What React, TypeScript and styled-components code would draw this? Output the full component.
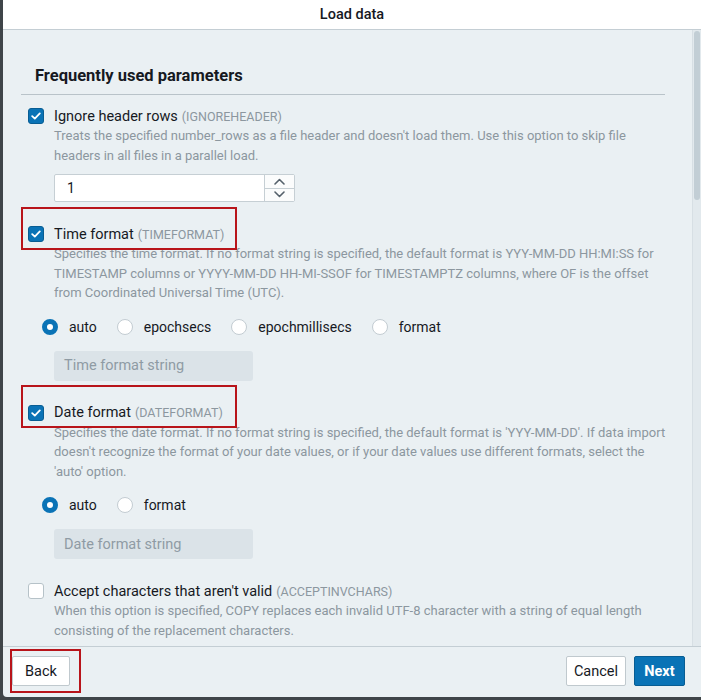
import React from 'react'
import styled, { createGlobalStyle } from 'styled-components'

const GlobalStyle = createGlobalStyle`
  html, body {
    margin: 0;
    padding: 0;
    background: #3f4549;
    font-family: Roboto, "Liberation Sans", sans-serif;
    -webkit-font-smoothing: antialiased;
  }
`

const Dialog = styled.div`
  margin-left: 3px;
  width: 698px;
  height: 697px;
  background: #eaf0f3;
  display: flex;
  flex-direction: column;
  border-bottom-left-radius: 4px;
  overflow: hidden;
`

const Header = styled.div`
  height: 29px;
  flex: none;
  background: #ffffff;
  border-bottom: 1px solid #c4ced4;
  display: flex;
  align-items: center;
  justify-content: center;
  font-size: 14.5px;
  font-weight: 500;
  color: #16191f;
`

const Body = styled.div`
  flex: 1;
  position: relative;
  overflow: hidden;
  padding: 36px 36px 0 18px;
`

const Scrollbar = styled.div`
  position: absolute;
  top: 0;
  right: 0;
  bottom: 0;
  width: 8px;
  background: #e2e9ed;
  border-left: 1px solid #d7dfe4;
`

const Thumb = styled.div`
  margin: 1px 1px 0 1px;
  height: 169px;
  border-radius: 3px;
  background: #c2ced5;
`

const SectionTitle = styled.h2`
  margin: 0;
  padding: 0 0 8px 14px;
  font-size: 16.5px;
  line-height: 20px;
  font-weight: 700;
  color: #16191f;
  border-bottom: 1px solid #b9c3c9;
`

const Options = styled.div`
  display: flex;
  flex-direction: column;
  gap: 22px;
  padding: 11px 0 0 7px;
`

const Option = styled.div`
  display: flex;
  flex-direction: column;
`

const LabelRow = styled.label`
  position: relative;
  display: flex;
  align-items: center;
  gap: 10px;
  height: 20px;
  font-size: 14.5px;
  color: #16191f;
`

const Box = styled.span<{ $checked?: boolean }>`
  width: 16px;
  height: 16px;
  box-sizing: border-box;
  border-radius: 3px;
  flex: none;
  display: flex;
  align-items: center;
  justify-content: center;
  background: ${(p) => (p.$checked ? '#0a73b6' : '#ffffff')};
  border: 1px solid ${(p) => (p.$checked ? '#085d93' : '#b6c2c8')};
`

const Code = styled.span`
  font-size: 12.5px;
  color: #8c979f;
  margin-left: 4px;
`

const Desc = styled.p`
  margin: 0 -8px 0 0;
  padding-left: 26px;
  font-size: 13px;
  line-height: 19.5px;
  color: #8c979f;
`

const RadioGroup = styled.div`
  display: flex;
  align-items: center;
  gap: 20px;
  margin: 14px 0 0 14px;
`

const RadioItem = styled.label`
  display: flex;
  align-items: center;
  gap: 11px;
  height: 20px;
  font-size: 14px;
  color: #16191f;
`

const Radio = styled.span<{ $on?: boolean }>`
  width: 16px;
  height: 16px;
  box-sizing: border-box;
  border-radius: 50%;
  background: #ffffff;
  border: ${(p) => (p.$on ? '5px solid #0a73b6' : '1px solid #c3ccd2')};
`

const NumberField = styled.div`
  margin: 9px 0 0 26px;
  width: 241px;
  height: 28px;
  box-sizing: border-box;
  display: flex;
  background: #ffffff;
  border: 1px solid #c6cfd4;
  border-radius: 2px;
`

const NumberValue = styled.div`
  flex: 1;
  padding-left: 12px;
  display: flex;
  align-items: center;
  font-size: 14px;
  color: #16191f;
`

const Spinner = styled.div`
  width: 29px;
  display: flex;
  flex-direction: column;
  border-left: 1px solid #c6cfd4;
  background: #fbfcfc;
`

const SpinButton = styled.span<{ $top?: boolean }>`
  flex: 1;
  display: flex;
  align-items: center;
  justify-content: center;
  border-bottom: ${(p) => (p.$top ? '1px solid #c6cfd4' : 'none')};
`

const TextField = styled.div`
  margin: 14px 0 0 26px;
  width: 199px;
  height: 30px;
  box-sizing: border-box;
  padding-left: 10px;
  display: flex;
  align-items: center;
  border-radius: 3px;
  background: #dbe3e8;
  font-size: 14.5px;
  color: #8f9ba4;
`

const Footer = styled.div`
  flex: none;
  height: 48px;
  border-top: 1px solid #c4ced4;
  display: flex;
  align-items: center;
  padding: 0 16px 2px 9px;
  gap: 8px;
`

const Spacer = styled.div`
  flex: 1;
`

const Marked = styled.div`
  position: relative;
  display: flex;
`

const Button = styled.button<{ $primary?: boolean; $w: number }>`
  width: ${(p) => p.$w}px;
  height: 30px;
  padding: 0;
  border-radius: 2px;
  font-family: inherit;
  font-size: 14.5px;
  font-weight: ${(p) => (p.$primary ? 700 : 400)};
  color: ${(p) => (p.$primary ? '#ffffff' : '#16191f')};
  background: ${(p) => (p.$primary ? '#0a73b6' : '#ffffff')};
  border: 1px solid ${(p) => (p.$primary ? '#085d93' : '#c0c9ce')};
`

const Annotation = styled.span<{ $l: number; $t: number; $w: number; $h: number }>`
  position: absolute;
  left: ${(p) => p.$l}px;
  top: ${(p) => p.$t}px;
  width: ${(p) => p.$w}px;
  height: ${(p) => p.$h}px;
  box-sizing: border-box;
  border: 2px solid #b8141a;
  pointer-events: none;
`

const Check = () => (
  <svg width="10" height="8" viewBox="0 0 10 8">
    <path d="M1.2 4.2 L3.8 6.6 L8.8 1.4" fill="none" stroke="#fff" strokeWidth="1.8" strokeLinecap="round" strokeLinejoin="round" />
  </svg>
)

const Chevron = ({ up }: { up?: boolean }) => (
  <svg width="11" height="7" viewBox="0 0 11 7">
    <path d={up ? 'M1 6 L5.5 1.5 L10 6' : 'M1 1 L5.5 5.5 L10 1'} fill="none" stroke="#55616b" strokeWidth="1.6" strokeLinecap="round" strokeLinejoin="round" />
  </svg>
)

type Mark = { l: number; t: number; w: number; h: number }

function CheckRow({ checked, label, code, mark }: { checked?: boolean; label: string; code: string; mark?: Mark }) {
  return (
    <LabelRow>
      <Box $checked={checked}>{checked && <Check />}</Box>
      <span>
        {label}
        <Code>({code})</Code>
      </span>
      {mark && <Annotation $l={mark.l} $t={mark.t} $w={mark.w} $h={mark.h} />}
    </LabelRow>
  )
}

function Radios({ items }: { items: string[] }) {
  return (
    <RadioGroup>
      {items.map((it, i) => (
        <RadioItem key={it}>
          <Radio $on={i === 0} />
          {it}
        </RadioItem>
      ))}
    </RadioGroup>
  )
}

export default function App() {
  return (
    <>
      <GlobalStyle />
      <Dialog>
        <Header>Load data</Header>
        <Body>
          <SectionTitle>Frequently used parameters</SectionTitle>
          <Options>
            <Option>
              <CheckRow checked label="Ignore header rows" code="IGNOREHEADER" />
              <Desc>
                Treats the specified number_rows as a file header and doesn't load them. Use this option to skip file
                headers in all files in a parallel load.
              </Desc>
              <NumberField>
                <NumberValue>1</NumberValue>
                <Spinner>
                  <SpinButton $top><Chevron up /></SpinButton>
                  <SpinButton><Chevron /></SpinButton>
                </Spinner>
              </NumberField>
            </Option>
            <Option>
              <CheckRow checked label="Time format" code="TIMEFORMAT" mark={{ l: -7, t: -17, w: 216, h: 43 }} />
              <Desc>
                Specifies the time format. If no format string is specified, the default format is YYY-MM-DD HH:MI:SS for
                TIMESTAMP columns or YYYY-MM-DD HH-MI-SSOF for TIMESTAMPTZ columns, where OF is the offset
                from Coordinated Universal Time (UTC).
              </Desc>
              <Radios items={['auto', 'epochsecs', 'epochmillisecs', 'format']} />
              <TextField>Time format string</TextField>
            </Option>
            <Option>
              <CheckRow checked label="Date format" code="DATEFORMAT" mark={{ l: -7, t: -18, w: 216, h: 43 }} />
              <Desc>
                Specifies the date format. If no format string is specified, the default format is 'YYY-MM-DD'. If data import
                doesn't recognize the format of your date values, or if your date values use different formats, select the
                'auto' option.
              </Desc>
              <Radios items={['auto', 'format']} />
              <TextField>Date format string</TextField>
            </Option>
            <Option>
              <CheckRow label="Accept characters that aren't valid" code="ACCEPTINVCHARS" />
              <Desc>
                When this option is specified, COPY replaces each invalid UTF-8 character with a string of equal length
                consisting of the replacement characters.
              </Desc>
              <TextField />
            </Option>
          </Options>
          <Scrollbar>
            <Thumb />
          </Scrollbar>
        </Body>
        <Footer>
          <Marked>
            <Button $w={58}>Back</Button>
            <Annotation $l={-2} $t={-7} $w={71} $h={44} />
          </Marked>
          <Spacer />
          <Button $w={60}>Cancel</Button>
          <Button $primary $w={51}>Next</Button>
        </Footer>
      </Dialog>
    </>
  )
}
